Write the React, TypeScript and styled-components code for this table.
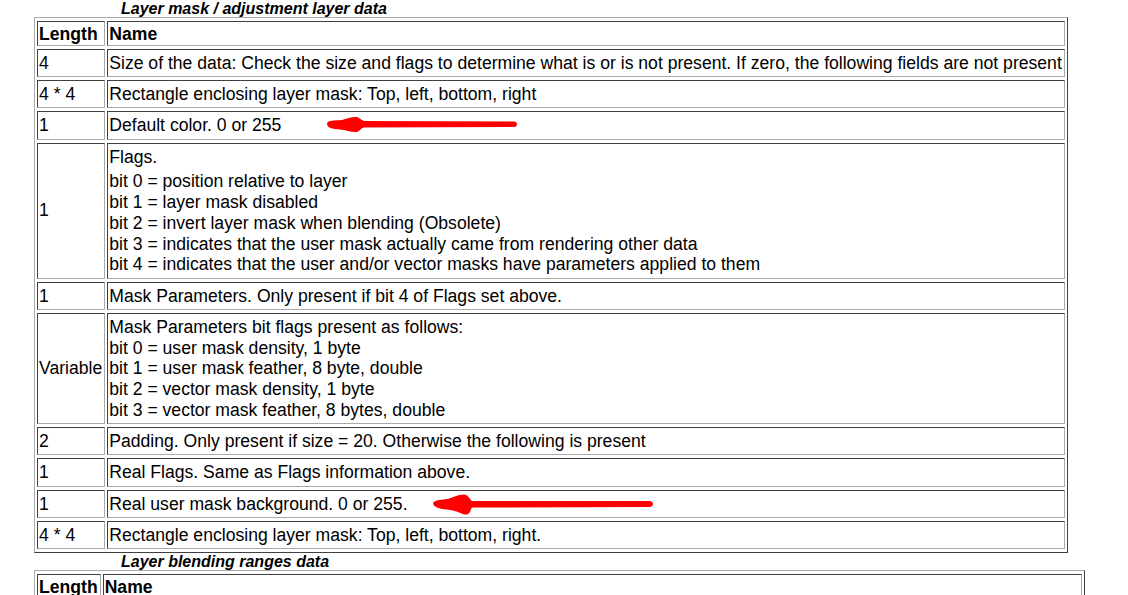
import React from "react";
import styled, { createGlobalStyle } from "styled-components";

const GlobalStyle = createGlobalStyle`
  html, body {
    margin: 0;
    padding: 0;
    background: #ffffff;
  }
  body {
    font-family: "Liberation Sans", Arial, sans-serif;
    color: #000000;
  }
`;

const Page = styled.div`
  position: relative;
  padding: 0 0 0 34px;
  width: 1128px;
  height: 595px;
  overflow: hidden;
  box-sizing: border-box;
`;

const Caption = styled.div`
  padding-left: 87px;
  font-size: 16px;
  line-height: 17px;
  font-weight: bold;
  font-style: italic;
`;

const Table = styled.table<{ $gap?: number; $width?: number }>`
  border-collapse: separate;
  border-spacing: 2px 3px;
  border-style: solid;
  border-width: 1px;
  border-color: #a9a9a9 #404040 #404040 #a9a9a9;
  margin-bottom: ${(p) => p.$gap ?? 0}px;
  width: ${(p) => (p.$width ? `${p.$width}px` : "auto")};
  font-size: 17.6px;
  line-height: 20.75px;
`;

const Cell = styled.td<{ $head?: boolean; $shrink?: boolean }>`
  border-style: solid;
  border-width: 1px;
  border-color: #404040 #a9a9a9 #a9a9a9 #404040;
  padding: ${(p) => (p.$head ? "2px 2px 0 1px" : "3px 2px 2.5px 1px")};
  vertical-align: middle;
  font-weight: ${(p) => (p.$head ? "bold" : "normal")};
  white-space: nowrap;
  text-align: left;
  width: ${(p) => (p.$shrink ? "1%" : "auto")};
`;

const FirstLine = styled.div<{ $space?: boolean }>`
  margin-bottom: ${(p) => (p.$space ? 4 : 0)}px;
`;

const Line = styled.div``;

const Scribble = styled.svg`
  position: absolute;
  left: 0;
  top: 0;
  pointer-events: none;
`;

type Row = { len: string; name: string[]; spaced?: boolean };

const maskRows: Row[] = [
  {
    len: "4",
    name: [
      "Size of the data: Check the size and flags to determine what is or is not present. If zero, the following fields are not present",
    ],
  },
  { len: "4 * 4", name: ["Rectangle enclosing layer mask: Top, left, bottom, right"] },
  { len: "1", name: ["Default color. 0 or 255"] },
  {
    len: "1",
    spaced: true,
    name: [
      "Flags.",
      "bit 0 = position relative to layer",
      "bit 1 = layer mask disabled",
      "bit 2 = invert layer mask when blending (Obsolete)",
      "bit 3 = indicates that the user mask actually came from rendering other data",
      "bit 4 = indicates that the user and/or vector masks have parameters applied to them",
    ],
  },
  { len: "1", name: ["Mask Parameters. Only present if bit 4 of Flags set above."] },
  {
    len: "Variable",
    name: [
      "Mask Parameters bit flags present as follows:",
      "bit 0 = user mask density, 1 byte",
      "bit 1 = user mask feather, 8 byte, double",
      "bit 2 = vector mask density, 1 byte",
      "bit 3 = vector mask feather, 8 bytes, double",
    ],
  },
  { len: "2", name: ["Padding. Only present if size = 20. Otherwise the following is present"] },
  { len: "1", name: ["Real Flags. Same as Flags information above."] },
  { len: "1", name: ["Real user mask background. 0 or 255."] },
  { len: "4 * 4", name: ["Rectangle enclosing layer mask: Top, left, bottom, right."] },
];

const NameCell: React.FC<{ row: Row }> = ({ row }) => (
  <Cell>
    {row.name.map((text, i) =>
      i === 0 ? (
        <FirstLine key={i} $space={row.spaced}>
          {text}
        </FirstLine>
      ) : (
        <Line key={i}>{text}</Line>
      )
    )}
  </Cell>
);

// shrink: the blending table has a fixed width, its first column hugs its text
const HeadRow: React.FC<{ shrink?: boolean }> = ({ shrink }) => (
  <tr>
    <Cell $head $shrink={shrink}>
      Length
    </Cell>
    <Cell $head>Name</Cell>
  </tr>
);

const App: React.FC = () => (
  <Page>
    <GlobalStyle />
    <Caption>Layer mask / adjustment layer data</Caption>
    <Table>
      <tbody>
        <HeadRow />
        {maskRows.map((row, i) => (
          <tr key={i}>
            <Cell>{row.len}</Cell>
            <NameCell row={row} />
          </tr>
        ))}
      </tbody>
    </Table>
    <Caption>Layer blending ranges data</Caption>
    <Table $width={1051}>
      <tbody>
        <HeadRow shrink />
      </tbody>
    </Table>
    <Scribble width="1128" height="595" viewBox="0 0 1128 595">
      <path
        d="M327 123.5 C328 120 334 120.5 342 120 C347 118.5 352 116.5 357 117 C360 118 361 120 364 121 L514 121.5 C518 122 518 126.5 514 127 L364 127.5 C361 128 360 131 357 132 C351 132.5 346 130 340 129.5 C332 129 327 128 327 123.5 Z"
        fill="#ff0000"
      />
      <path
        d="M433 503.5 C434 500 440 500 447 499 C453 497.5 458 494.5 464 494.5 C468 495 469 498 472 501 L650 501 C654 501.5 654 506.5 650 507 L472 507.5 C470 510 471 513 467 514.5 C462 515 458 511 450 510 C441 509 434 508 433 503.5 Z"
        fill="#ff0000"
      />
    </Scribble>
  </Page>
);

export default App;
